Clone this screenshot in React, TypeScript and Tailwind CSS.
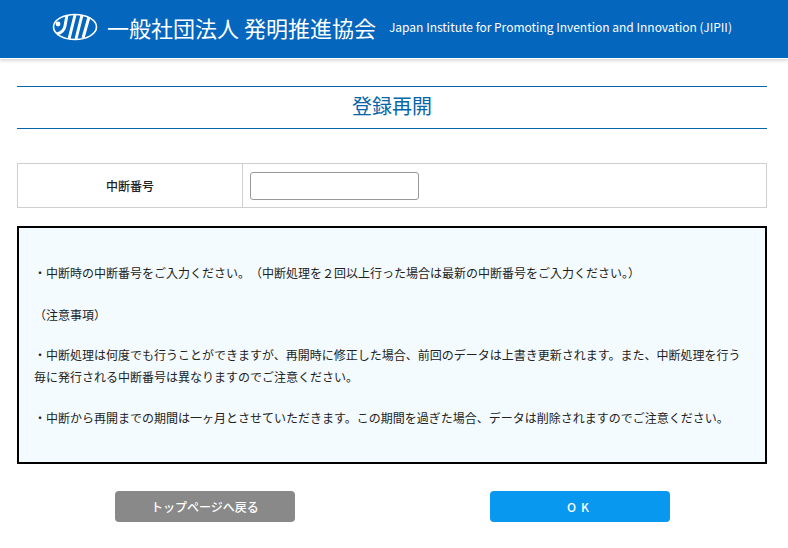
const cjk = "font-['Noto_Sans_CJK_JP','Noto_Sans',sans-serif]";

function Logo() {
  return (
    <svg width="46" height="28" viewBox="0 0 46 28" className="shrink-0">
      <ellipse cx="23" cy="14" rx="21.5" ry="12.5" fill="#0566bd" stroke="#fff" strokeWidth="1.6" />
      <g stroke="#fff" strokeWidth="3" fill="none">
        <path d="M15 2 L13 13 Q12 19 5 21" />
        <path d="M23 2 L17 26" />
        <path d="M30 2 L24 26" />
        <path d="M37 4 L31 25" />
      </g>
      <circle cx="6" cy="11" r="2.4" fill="#fff" />
    </svg>
  );
}

export default function App() {
  return (
    <div className={`min-h-[548px] bg-white text-[#222] ${cjk}`}>
      <header className="h-[59px] border-b border-white shadow-[0_2px_3px_rgba(0,0,0,0.15)]">
        <div className="flex h-[58px] items-center bg-[#0566bd] pb-[4px] pl-[52px] text-white">
          <Logo />
          <span className="ml-[9px] text-[22px] leading-none whitespace-nowrap">一般社団法人 発明推進協会</span>
          <span className="ml-[13px] text-[12px] leading-none whitespace-nowrap">
            Japan Institute for Promoting Invention and Innovation (JIPII)
          </span>
        </div>
      </header>

      <main className="px-[17px] pr-[21px] pt-[27px]">
        <h1 className="flex h-[43px] items-center justify-center border-y border-[#0566a8] pb-[4px] text-[20px] leading-none text-[#0566a8]">
          登録再開
        </h1>

        <div className="mt-[34px] flex h-[45px] border border-[#cfcfcf]">
          <div className="flex w-[225px] items-center justify-center border-r border-[#cfcfcf] text-[12px] font-medium">
            中断番号
          </div>
          <div className="flex items-center pl-[7px]">
            <input className="h-[28px] w-[169px] rounded-[3px] border border-[#999] bg-white" />
          </div>
        </div>

        <section className="mt-[18px] h-[238px] border-2 border-black bg-[#f3fbff] px-[15px] pt-[34px] text-[12px] leading-[22px]">
          <p>
            ・中断時の中断番号をご入力ください<span className="[text-spacing-trim:space-all]">。（</span>中断処理を２回以上行った場合は最新の中断番号をご入力ください。）
          </p>
          <p className="mt-[20px]">（注意事項）</p>
          <p className="mt-[18px]">
            ・中断処理は何度でも行うことができますが、再開時に修正した場合、前回のデータは上書き更新されます。また、中断処理を行う毎に発行される中断番号は異なりますのでご注意ください。
          </p>
          <p className="mt-[19px]">・中断から再開までの期間は一ヶ月とさせていただきます。この期間を過ぎた場合、データは削除されますのでご注意ください。</p>
        </section>

        <div className="mt-[27px] flex pl-[98px]">
          <button className="h-[31px] w-[180px] rounded-[4px] bg-[#898989] text-[12px] font-medium text-white">
            トップページへ戻る
          </button>
          <button className="ml-[195px] h-[31px] w-[180px] rounded-[4px] bg-[#0898f0] pl-[1px] text-[12px] font-medium tracking-[5px] text-white">
            OK
          </button>
        </div>
      </main>
    </div>
  );
}
